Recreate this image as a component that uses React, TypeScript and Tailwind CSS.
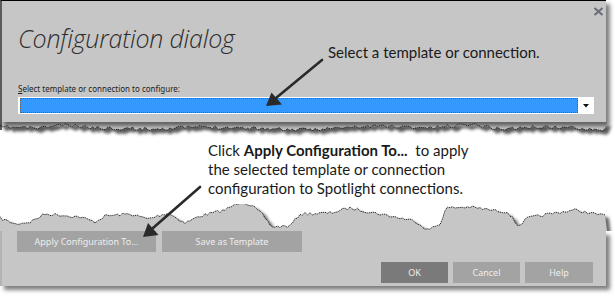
import React from "react";

function rng(seed: number) {
  let s = seed;
  return () => {
    s = (s * 16807) % 2147483647;
    return (s - 1) / 2147483646;
  };
}

// builds a ragged "torn paper" line through a few key points
function tornEdge(keys: number[][], seed: number, amp: number, dy: number) {
  const r = rng(seed);
  const pts: [number, number][] = [];
  let i = 0;
  for (let x = 0; x <= 607; x += 2.5) {
    while (i < keys.length - 2 && keys[i + 1][0] < x) i++;
    const [x0, y0] = keys[i];
    const [x1, y1] = keys[i + 1];
    const t = Math.min(1, Math.max(0, (x - x0) / (x1 - x0)));
    pts.push([x, y0 + (y1 - y0) * t + (r() - 0.5) * amp - dy]);
  }
  return pts;
}

const topKeys = [
  [0, 127], [40, 128], [60, 125], [100, 128], [150, 129], [200, 127], [250, 128],
  [300, 130], [340, 128], [380, 126], [430, 128], [470, 124], [500, 129], [540, 127],
  [580, 128], [607, 130],
];

const bottomKeys = [
  [0, 218], [15, 224], [30, 222], [45, 214], [60, 215], [80, 217], [95, 222], [105, 216],
  [130, 214], [148, 219], [168, 213], [185, 223], [200, 216], [225, 210], [242, 201],
  [252, 206], [262, 214], [272, 227], [290, 226], [300, 214], [330, 213], [350, 208],
  [375, 213], [395, 217], [415, 221], [428, 230], [440, 224], [446, 208], [470, 207],
  [490, 210], [508, 212], [518, 226], [528, 218], [555, 213], [575, 210], [595, 214],
  [607, 216],
];

const line = (pts: [number, number][]) => pts.map(([x, y]) => `${x},${y.toFixed(1)}`).join(" ");

function TopTear() {
  const pts = tornEdge(topKeys, 11, 3.5, 122);
  const fill = `M0,0 L607,0 ` + pts.slice().reverse().map(([x, y]) => `L${x},${y.toFixed(1)}`).join(" ") + " Z";
  return (
    <svg width="615" height="18" className="block">
      <defs>
        <filter id="blurA" x="-5%" y="-50%" width="110%" height="200%">
          <feGaussianBlur stdDeviation="1.8" />
        </filter>
      </defs>
      <rect width="615" height="18" fill="#ffffff" />
      <path d={fill} fill="#5c5c5c" transform="translate(4,4)" filter="url(#blurA)" />
      <path d={fill} fill="#c6c6c6" />
      <rect x="0" y="0" width="2" height="8" fill="#5a5a5a" />
      <polyline points={line(pts)} fill="none" stroke="#111" strokeWidth="0.9" strokeDasharray="1.2 0.8" />
    </svg>
  );
}

function BottomTear() {
  const pts = tornEdge(bottomKeys, 7, 3, 204);
  const fill = `M0,27 L607,27 ` + pts.slice().reverse().map(([x, y]) => `L${x},${y.toFixed(1)}`).join(" ") + " Z";
  return (
    <svg width="615" height="27" className="block">
      <defs>
        <filter id="blurB" x="-5%" y="-50%" width="110%" height="200%">
          <feGaussianBlur stdDeviation="1.5" />
        </filter>
      </defs>
      <rect width="615" height="27" fill="#ffffff" />
      <path d={fill} fill="#6a6a6a" transform="translate(4,3)" filter="url(#blurB)" />
      <path d={fill} fill="#c6c6c6" />
      <polyline points={line(pts)} fill="none" stroke="#111" strokeWidth="0.9" strokeDasharray="1.2 0.8" />
    </svg>
  );
}

function Btn({ label, dark, w }: { label: string; dark?: boolean; w: string }) {
  return (
    <div
      className={`${w} h-[21px] flex items-center justify-center text-[9px] text-[#eeeeee] ${
        dark ? "bg-[#7a7a7a]" : "bg-[#a3a3a3]"
      }`}
    >
      {label}
    </div>
  );
}

export default function App() {
  return (
    <div
      className="relative w-[615px] h-[296px] bg-white overflow-hidden"
      style={{ fontFamily: "'Noto Sans', sans-serif" }}
    >
      {/* top half of the dialog */}
      <div className="relative h-[122px] w-[606px] bg-[#c6c6c6] border-t border-black border-l-2 border-l-[#5a5a5a] shadow-[4px_4px_4px_rgba(0,0,0,0.5)] pl-[16px]">
        <div className="flex justify-end pt-[6px] pr-[2px]">
          <svg width="11" height="9" viewBox="0 0 11 9">
            <path d="M1.5 1 L9.5 8 M9.5 1 L1.5 8" stroke="#6b6f7c" strokeWidth="2.2" />
          </svg>
        </div>
        <h1
          className="mt-[7px] text-[25px] leading-[30px] italic font-light text-[#2e2e2e] tracking-[-0.2px]"
          style={{ fontFamily: "'Open Sans', sans-serif" }}
        >
          Configuration dialog
        </h1>
        <div className="mt-[31px] text-[8px] leading-[10px] text-[#222]">
          <span className="underline">S</span>elect template or connection to configure:
        </div>
        <div className="mt-[3px] flex h-[17px] w-[576px] bg-white p-[1px] pl-[2px]">
          <div className="flex-1 bg-[#3399ff] border border-dotted border-[#7a5a30]" />
          <div className="w-[15px] flex items-center justify-center">
            <svg width="6" height="4" viewBox="0 0 6 4">
              <path d="M0 0 L6 0 L3 3.5 Z" fill="#111" />
            </svg>
          </div>
        </div>
      </div>
      <TopTear />

      {/* annotation between the tears */}
      <div
        className="h-[64px] pl-[208px] pt-[1px] text-[15px] leading-[19px] text-[#1a1a1a]"
        style={{ fontFamily: "Lato, sans-serif" }}
      >
        <p>
          Click <b>Apply Configuration To...</b>&nbsp; to apply
        </p>
        <p>the selected template or connection</p>
        <p>configuration to Spotlight connections.</p>
      </div>

      <BottomTear />
      {/* bottom half of the dialog */}
      <div className="h-[55px] w-[606px] bg-[#c6c6c6] border-l-2 border-l-[#b4b4b4] shadow-[4px_4px_4px_rgba(0,0,0,0.5)]">
        <div className="flex gap-[6px] pl-[15px]">
          <Btn label="Apply Configuration To..." w="w-[139px]" />
          <Btn label="Save as Template" w="w-[140px]" />
        </div>
        <div className="mt-[10px] flex justify-end gap-[5px] pr-[13px]">
          <Btn label="OK" dark w="w-[67px]" />
          <Btn label="Cancel" w="w-[67px]" />
          <Btn label="Help" w="w-[68px]" />
        </div>
      </div>

      {/* callout that sits on the dialog */}
      <div
        className="absolute left-[328px] top-[43px] text-[15px] leading-[19px] text-[#1a1a1a]"
        style={{ fontFamily: "Lato, sans-serif" }}
      >
        Select a template or connection.
      </div>

      {/* arrows */}
      <svg className="absolute left-0 top-0 pointer-events-none" width="615" height="296">
        <g stroke="#2a2a2a" strokeWidth="2.6" strokeLinecap="round">
          <line x1="322" y1="60" x2="276" y2="98" />
          <line x1="200" y1="187" x2="153" y2="228" />
        </g>
        <path d="M266 106 L271.5 92.5 L282 104.5 Z" fill="#2a2a2a" />
        <path d="M143 237 L148 223 L158.5 235 Z" fill="#2a2a2a" />
      </svg>
    </div>
  );
}
